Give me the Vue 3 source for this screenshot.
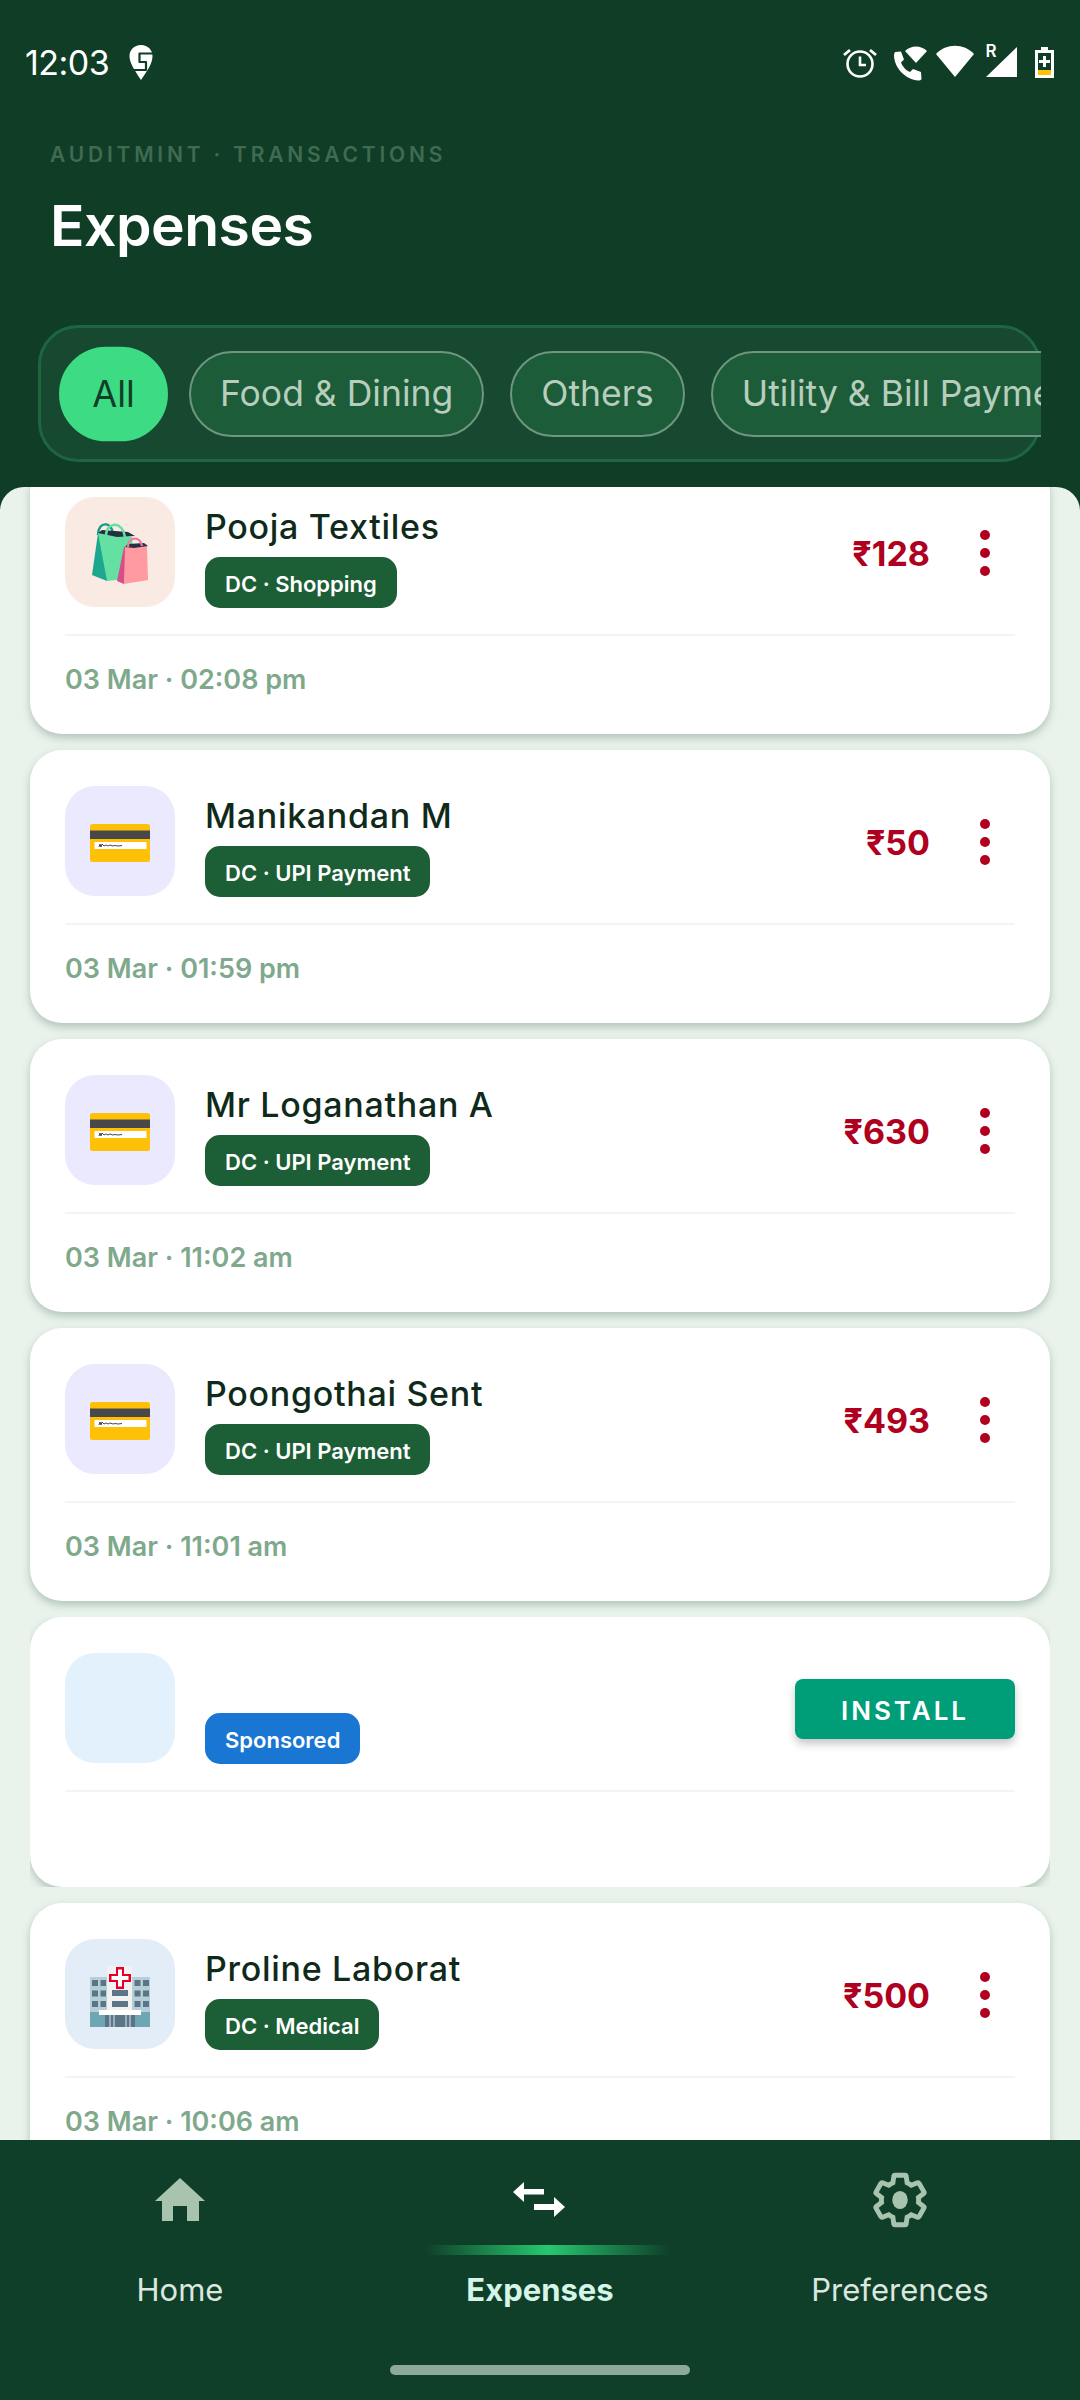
<template>
  <div class="screen">
    <!-- 상단 헤더 -->
    <header class="header">
      <div class="status-bar">
        <div class="status-left">
          <span class="clock">12:03</span>
          <svg class="swiggy" width="24" height="35" viewBox="0 0 24 35">
            <path d="M12 0C5 0 .5 5 .5 11c0 7 5 14 11.500 24C18 26 23.500 19 23.500 11 23.500 5 19 0 12 0z" fill="#fff" />
            <path d="M25 8.500H10.500V17H17V25H-1" fill="none" stroke="#0f3d26" stroke-width="2.200" stroke-linejoin="round" />
          </svg>
        </div>
        <svg class="status-right" width="220" height="45" viewBox="840 40 220 45">
          <g fill="none" stroke="#fff">
            <circle cx="860" cy="64" r="12.500" stroke-width="2.600" />
            <path d="M860 56.500V65H866" stroke-width="2.600" />
            <path d="M850 50l-6 5M870 50l6 5" stroke-width="2.800" />
          </g>
          <path d="M895 52l6-.5 3 8-3 3c1.500 4 5 8 9 9.500l3-3 8 3 .5 7c-.5 1-2 1.500-3 1.500-13-1-24-12-24.500-25 0-1 .5-2.500 1-3.500z" fill="#fff" />
          <path d="M905 51c6-6 16-6 22 0l-11 12z" fill="#fff" />
          <path d="M936 54c10-11 28-11 38 0l-19 23z" fill="#fff" />
          <text x="985.500" y="57" class="roam">R</text>
          <path d="M1017 47V77H986z" fill="#fff" />
          <path d="M1041 47h7v3h6v28h-19V50h6z" fill="#fff" />
          <rect x="1038" y="53" width="13" height="17" fill="#0f3d26" />
          <path d="M1043 56h3v4h4v3h-4v4h-3v-4h-4v-3h4z" fill="#fff" />
          <rect x="1038" y="70" width="13" height="5" fill="#ffc107" />
        </svg>
      </div>
      <div class="eyebrow">AUDITMINT · TRANSACTIONS</div>
      <h1 class="title">Expenses</h1>

      <div class="filter-panel">
        <div class="filter-strip">
          <span
            v-for="(chip, i) in filters"
            :key="chip"
            class="chip"
            :class="{ active: i === 0 }"
          >{{ chip }}</span>
        </div>
      </div>
    </header>

    <!-- 거래 목록 -->
    <main class="list-wrap">
      <div class="list">
        <template v-for="item in items" :key="item.id">
          <div v-if="item.ad" class="ad-clip">
            <article class="card">
              <div class="row">
                <div class="thumb thumb-ad"></div>
                <div class="info">
                  <span class="tag tag-ad">Sponsored</span>
                </div>
                <button class="install">INSTALL</button>
              </div>
              <div class="divider"></div>
              <div class="ad-foot"></div>
            </article>
          </div>

          <article v-else class="card">
            <div class="row">
              <div class="thumb" :class="'thumb-' + item.icon">
                <svg v-if="item.icon === 'bag'" width="110" height="110" viewBox="0 0 110 110">
                  <path d="M33 38c0-14 14-14 15-1" fill="none" stroke="#1f9c85" stroke-width="2.500" />
                  <path d="M33 36L27 78l15 6 3-46z" fill="#1ea78f" />
                  <path d="M33 36l34 4 3 41-28 3z" fill="#63e0a2" />
                  <path d="M33 36l4-3 26 2 7 4-18 1z" fill="#23303f" />
                  <path d="M41 38c1-14 17-14 19 2" fill="none" stroke="#63e0a2" stroke-width="2.500" />
                  <path d="M59 50L52 84l7 3 3-37z" fill="#d84c88" />
                  <path d="M60 50l22-1 1 34-24 4z" fill="#ff9ba0" />
                  <path d="M60 50l3-3 16-1 4 3-14 2z" fill="#2b3044" />
                  <path d="M63 50c0-11 13-11 14-1" fill="none" stroke="#ef7ba3" stroke-width="2.200" />
                </svg>
                <svg v-else-if="item.icon === 'card'" width="110" height="110" viewBox="0 0 110 110">
                  <rect x="25" y="38" width="60" height="38" rx="2.500" fill="#ffc107" />
                  <rect x="25" y="44.500" width="60" height="8.500" fill="#484848" />
                  <rect x="29.500" y="56" width="52" height="7" fill="#fff" />
                  <path d="M34 61l1-3 1 3 1-3 2 2 2-1 2 1 2-1 3 1 2-.5 3 .5 4-.5" fill="none" stroke="#333" stroke-width=".9" />
                </svg>
                <svg v-else width="110" height="110" viewBox="0 0 110 110">
                  <rect x="25" y="38" width="60" height="50" rx="1" fill="#b5cfd6" />
                  <rect x="25" y="73" width="60" height="15" fill="#6fa6b4" />
                  <rect x="42" y="27" width="25" height="46" fill="#f1f1f1" />
                  <g fill="#5b7586">
                    <template v-for="y in [41, 51.500, 62]" :key="y">
                      <rect x="27" :y="y" width="6" height="6" />
                      <rect x="35.500" :y="y" width="5.500" height="6" />
                      <rect x="69.500" :y="y" width="6" height="6" />
                      <rect x="78" :y="y" width="6" height="6" />
                    </template>
                    <rect x="47" y="51" width="16" height="6" />
                    <rect x="47" y="62" width="16" height="6" />
                    <rect x="40" y="76" width="30" height="12" />
                  </g>
                  <path d="M45 88V76M49 88V76M61 88V76M65 88V76" stroke="#b5cfd6" stroke-width="1.300" />
                  <rect x="34" y="71" width="42" height="5" fill="#fff" />
                  <path d="M51 28h8v7h7v8h-7v7h-8v-7h-7v-8h7z" fill="#e4002b" />
                  <path d="M53 30.500h4v6.500h6.500v4H57v6.500h-4V41h-6.500v-4H53z" fill="#fff" />
                </svg>
              </div>
              <div class="info">
                <div class="name">{{ item.name }}</div>
                <span class="tag">{{ item.tag }}</span>
              </div>
              <div class="amount">{{ item.amount }}</div>
              <div class="more">
                <i></i><i></i><i></i>
              </div>
            </div>
            <div class="divider"></div>
            <div class="date">{{ item.date }}</div>
          </article>
        </template>
      </div>
    </main>

    <!-- 하단 탭 -->
    <nav class="nav">
      <div class="tabs">
        <div class="tab">
          <div class="tab-icon">
            <svg width="50" height="44" viewBox="0 0 50 44">
              <path d="M25 0L50 23H44V43H32V28H18V43H7V23H0z" fill="#a8c3ae" />
            </svg>
          </div>
          <div class="glow-slot"></div>
          <div class="tab-label">Home</div>
        </div>
        <div class="tab tab-on">
          <div class="tab-icon">
            <svg width="54" height="36" viewBox="0 0 54 36">
              <path d="M0 10L11 0V7H31V12.500H11V20z" fill="#fff" />
              <path d="M52 25L41 15V22H21V28H41V35z" fill="#fff" />
            </svg>
          </div>
          <div class="glow-slot"><div class="glow"></div></div>
          <div class="tab-label">Expenses</div>
        </div>
        <div class="tab">
          <div class="tab-icon">
            <svg width="62" height="62" viewBox="0 0 24 24">
              <path
                d="M19.140 12.940c.04-.3.06-.61.06-.94 0-.32-.02-.64-.07-.94l2.030-1.580c.18-.14.23-.41.12-.61l-1.920-3.320c-.12-.22-.37-.29-.59-.22l-2.390.96c-.5-.38-1.030-.7-1.620-.94l-.36-2.540c-.04-.24-.24-.41-.48-.41h-3.840c-.24 0-.43.17-.47.41l-.36 2.540c-.59.24-1.130.57-1.620.94l-2.390-.96c-.22-.08-.47 0-.59.22L2.740 8.870c-.12.21-.08.47.12.61l2.030 1.580c-.05.3-.09.63-.09.94s.02.64.07.94l-2.030 1.580c-.18.14-.23.41-.12.61l1.920 3.320c.12.22.37.29.59.22l2.390-.96c.5.38 1.030.7 1.620.94l.36 2.540c.05.24.24.41.48.41h3.840c.24 0 .44-.17.47-.41l.36-2.540c.59-.24 1.130-.56 1.620-.94l2.390.96c.22.08.47 0 .59-.22l1.920-3.320c.12-.22.07-.47-.12-.61l-2.010-1.580z"
                fill="none"
                stroke="#a8c3ae"
                stroke-width="1.900"
                stroke-linejoin="miter"
              />
              <ellipse cx="12" cy="12" rx="3" ry="3.500" fill="#a8c3ae" />
            </svg>
          </div>
          <div class="glow-slot"></div>
          <div class="tab-label">Preferences</div>
        </div>
      </div>
      <div class="home-bar"></div>
    </nav>
  </div>
</template>

<script setup>
const filters = ["All", "Food & Dining", "Others", "Utility & Bill Payments"];

const items = [
  { id: 1, icon: "bag", name: "Pooja Textiles", tag: "DC · Shopping", amount: "₹128", date: "03 Mar · 02:08 pm" },
  { id: 2, icon: "card", name: "Manikandan M", tag: "DC · UPI Payment", amount: "₹50", date: "03 Mar · 01:59 pm" },
  { id: 3, icon: "card", name: "Mr Loganathan A", tag: "DC · UPI Payment", amount: "₹630", date: "03 Mar · 11:02 am" },
  { id: 4, icon: "card", name: "Poongothai Sent", tag: "DC · UPI Payment", amount: "₹493", date: "03 Mar · 11:01 am" },
  { id: 5, ad: true },
  { id: 6, icon: "hospital", name: "Proline Laborat", tag: "DC · Medical", amount: "₹500", date: "03 Mar · 10:06 am" }
];
</script>

<style>
html,
body {
  margin: 0;
  background: #0f3d26;
}
</style>

<style scoped>
* {
  box-sizing: border-box;
}

.screen {
  width: 1080px;
  height: 2400px;
  display: flex;
  flex-direction: column;
  overflow: hidden;
  font-family: "Inter", "Noto Sans", sans-serif;
  background: #0f3d26;
}

/* 헤더 */
.header {
  height: 487px;
  flex-shrink: 0;
  background: #0f3d26;
}

.status-bar {
  height: 124px;
  padding: 0 20px 0 25px;
  display: flex;
  align-items: center;
  justify-content: space-between;
}

.status-left {
  display: flex;
  align-items: center;
  gap: 20px;
}

.clock {
  font-size: 34px;
  color: #fff;
  letter-spacing: -0.5px;
}

.swiggy {
  margin-top: 1px;
}

.status-right {
  display: block;
}

.roam {
  font-size: 17px;
  font-weight: 600;
  fill: #fff;
}

.eyebrow {
  margin: 17px 0 0 50px;
  line-height: 28px;
  font-size: 21px;
  font-weight: 600;
  letter-spacing: 3.800px;
  color: #3f6b52;
}

.title {
  margin: 22px 0 0 50px;
  line-height: 70px;
  font-size: 57px;
  font-weight: 600;
  letter-spacing: -0.5px;
  color: #fff;
}

.filter-panel {
  margin: 64px 39px 0 38px;
  height: 137px;
  border: 3px solid #1e6640;
  border-radius: 40px;
  background: #16492f;
  display: flex;
  align-items: center;
}

.filter-strip {
  flex: 1;
  min-width: 0;
  height: 100%;
  margin-right: -3px;
  padding-left: 23px;
  display: flex;
  align-items: center;
  gap: 26px;
  overflow: hidden;
}

.chip {
  flex-shrink: 0;
  height: 86px;
  padding: 0 29px;
  display: flex;
  align-items: center;
  border: 2px solid #6f9680;
  border-radius: 43px;
  background: #1c5c38;
  font-size: 35.500px;
  color: #b7cdbd;
  white-space: nowrap;
}

.chip.active {
  width: 99px;
  padding: 0;
  justify-content: center;
  border-color: #3ddc84;
  background: #3ddc84;
  font-size: 33px;
  color: #0f3d26;
  transform: scale(1.1);
}

/* 목록 */
.list-wrap {
  flex: 1;
  min-height: 0;
  overflow: hidden;
  border-radius: 24px 24px 0 0;
  background: #e9f3ec;
}

.list {
  margin-top: -26px;
  padding: 0 30px;
  display: flex;
  flex-direction: column;
  gap: 16px;
}

.card {
  flex-shrink: 0;
  padding: 36px 35px 0;
  border-radius: 32px;
  background: #fff;
  box-shadow: 0 4px 9px rgba(20, 60, 40, 0.26);
}

/* 광고 카드: 그림자가 박스 안에서 잘림 */
.ad-clip {
  flex-shrink: 0;
  overflow: hidden;
}

.row {
  height: 111px;
  display: flex;
  align-items: center;
}

.thumb {
  width: 110px;
  height: 110px;
  flex-shrink: 0;
  align-self: flex-start;
  border-radius: 30px;
}

.thumb svg {
  display: block;
}

.thumb-bag {
  background: #f9ebe3;
}

.thumb-card {
  background: #ebe9fd;
}

.thumb-hospital {
  background: #e3edf7;
}

.thumb-ad {
  background: #e3f1fc;
}

.info {
  flex: 1;
  min-width: 0;
  height: 100%;
  margin-left: 30px;
  display: flex;
  flex-direction: column;
  align-items: flex-start;
  justify-content: flex-end;
}

.name {
  line-height: 40px;
  margin-bottom: 10px;
  font-size: 34px;
  font-weight: 500;
  letter-spacing: 0.7px;
  color: #0f2a1a;
}

.tag {
  height: 51px;
  padding: 3px 20px 0;
  display: flex;
  align-items: center;
  border-radius: 15px;
  background: #1c5e36;
  font-size: 22px;
  font-weight: 600;
  color: #fff;
}

.tag-ad {
  background: #1976d2;
}

.amount {
  margin-right: 25px;
  padding-top: 2px;
  font-size: 34px;
  font-weight: 700;
  color: #b00020;
}

.more {
  width: 60px;
  display: flex;
  flex-direction: column;
  align-items: center;
  gap: 8px;
}

.more i {
  width: 10px;
  height: 10px;
  border-radius: 50%;
  background: #b00020;
}

.install {
  width: 220px;
  height: 60px;
  padding: 3px 0 0;
  border: none;
  border-radius: 8px;
  background: #009e78;
  box-shadow: 0 5px 8px rgba(0, 0, 0, 0.22);
  font-family: inherit;
  font-size: 26px;
  font-weight: 600;
  letter-spacing: 3px;
  color: #fff;
}

.divider {
  height: 2px;
  margin-top: 26px;
  background: #f0f7f3;
}

.date {
  height: 98px;
  padding-top: 27px;
  line-height: 34px;
  font-size: 27px;
  font-weight: 600;
  color: #7fa98c;
}

.ad-foot {
  height: 95px;
}

/* 하단 탭 */
.nav {
  height: 260px;
  flex-shrink: 0;
  position: relative;
  padding-top: 30px;
  background: #0f3f28;
}

.tabs {
  display: grid;
  grid-template-columns: repeat(3, 1fr);
}

.tab {
  display: flex;
  flex-direction: column;
  align-items: center;
}

.tab-icon {
  height: 60px;
  display: flex;
  align-items: center;
  justify-content: center;
}

.glow-slot {
  height: 10px;
  margin-top: 15px;
}

.glow {
  width: 245px;
  height: 10px;
  margin-left: 14px;
  background: linear-gradient(90deg, transparent, #27c870, transparent);
}

.tab-label {
  margin-top: 15px;
  line-height: 40px;
  font-size: 31px;
  color: #dce7e0;
}

.tab-on .tab-label {
  font-weight: 700;
  color: #d5f5e9;
}

.home-bar {
  width: 300px;
  height: 10px;
  margin: 55px auto 0;
  border-radius: 5px;
  background: #8fa999;
}
</style>
